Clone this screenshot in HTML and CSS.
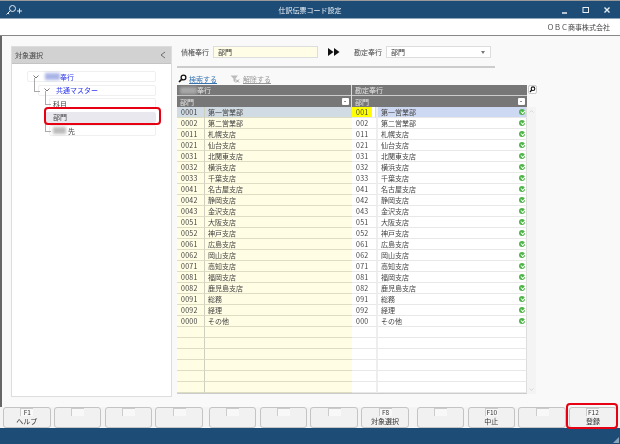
FILE: index.html
```html
<!DOCTYPE html>
<html lang="ja">
<head>
<meta charset="utf-8">
<title>仕訳伝票コード設定</title>
<link rel="stylesheet" href="styles.css">
</head>
<body>
<div class="window">
  <header class="titlebar">
    <svg class="title-icon" viewBox="0 0 18 12" width="18" height="12"><circle cx="7.5" cy="4.5" r="3" fill="none" stroke="#dfe8f0" stroke-width="1"/><path d="M5.5 6.5L1.5 10.5M3 9l1.2 1.2" stroke="#dfe8f0" fill="none"/><path d="M12 7h5M14.5 4.5v5" stroke="#dfe8f0" fill="none"/></svg>
    <span class="title-text">仕訳伝票コード設定</span>
    <div class="win-btns">
      <svg viewBox="0 0 8 8" width="8" height="8"><path d="M1 7h5" stroke="#e8eef4" stroke-width="1.5"/></svg>
      <svg viewBox="0 0 8 8" width="8" height="8"><rect x="1" y="1.5" width="5.5" height="5" fill="none" stroke="#e8eef4" stroke-width="1"/></svg>
      <svg viewBox="0 0 8 8" width="8" height="8"><path d="M1.5 1.5L6.5 6.5M6.5 1.5L1.5 6.5" stroke="#e8eef4" stroke-width="1.4"/></svg>
    </div>
  </header>
  <div class="company">ＯＢＣ商事株式会社</div>
  <main class="main">
    <aside class="side">
      <div class="side-head"><span>対象選択</span><svg viewBox="0 0 6 8" width="6" height="8"><path d="M5 1L1 4L5 7" fill="none" stroke="#555" stroke-width=".8"/></svg></div>
      <div class="tree">
        <div class="node n1 link"><svg class="chev" viewBox="0 0 6 4" width="6" height="4"><path d="M.5 .5L3 3L5.5 .5" fill="none" stroke="#555" stroke-width=".8"/></svg><i class="blur b1"></i><span>奉行</span></div>
        <div class="node n2 link con"><svg class="chev" viewBox="0 0 6 4" width="6" height="4"><path d="M.5 .5L3 3L5.5 .5" fill="none" stroke="#555" stroke-width=".8"/></svg><span>共通マスター</span></div>
        <div class="node n3 con"><span>科目</span></div>
        <div class="node n4 con"><span>部門</span></div>
        <div class="node n5 con"><i class="blur b2"></i><span>先</span></div>
        <div class="redbox tree-red"></div>
      </div>
    </aside>
    <section class="content">
      <div class="form">
        <label class="lab">債権奉行</label>
        <div class="field yellow">部門</div>
        <svg class="arrows" viewBox="0 0 12 8" width="12" height="8"><path d="M0 0L5.5 4L0 8ZM6 0L11.5 4L6 8Z" fill="#111"/></svg>
        <label class="lab">勘定奉行</label>
        <div class="field sel">部門<svg viewBox="0 0 4 3" width="4" height="3"><path d="M0 0H4L2 3Z" fill="#777"/></svg></div>
      </div>
      <div class="rule"></div>
      <div class="tools">
        <svg class="t-ico" viewBox="0 0 9 9" width="9" height="9"><circle cx="5.5" cy="3.5" r="2.4" fill="#fff" stroke="#111" stroke-width="1.3"/><path d="M3.6 5.4L1 8" stroke="#111" stroke-width="1.6"/></svg>
        <a class="tool on">検索する</a>
        <svg class="t-ico off" viewBox="0 0 10 8" width="10" height="8"><path d="M.5 .5H8L5.5 3.5V7.5L3.5 6V3.5Z" fill="#bbb"/><path d="M6 4.5L9 7.5M9 4.5L6 7.5" stroke="#888" stroke-width=".8"/></svg>
        <a class="tool">解除する</a>
      </div>
      <div class="gridwrap">
        <div class="heads">
          <div class="hcol hleft">
            <div class="h1"><i class="blur b3"></i>奉行</div>
            <div class="h2">部門<b class="drop"></b></div>
          </div>
          <div class="hcol hright">
            <div class="h1">勘定奉行</div>
            <div class="h2">部門<b class="drop"></b></div>
          </div>
          <svg class="zoomer" viewBox="0 0 9 9" width="9" height="9"><rect x=".4" y=".4" width="8.2" height="8.2" rx="2" fill="#fff" stroke="#aaa" stroke-width=".7"/><circle cx="5" cy="3.7" r="1.8" fill="none" stroke="#111" stroke-width="1.1"/><path d="M3.7 5L2 7" stroke="#111" stroke-width="1.3"/></svg>
        </div>
        <div class="body">
          <div class="rows" id="rows">
            <div class="row sel-row"><span class="c1">0001</span><span class="c2">第一営業部</span><span class="c3 cur">001</span><span class="c4">第一営業部<b class="ok"></b></span></div>
            <div class="row"><span class="c1">0002</span><span class="c2">第二営業部</span><span class="c3">002</span><span class="c4">第二営業部<b class="ok"></b></span></div>
            <div class="row"><span class="c1">0011</span><span class="c2">札幌支店</span><span class="c3">011</span><span class="c4">札幌支店<b class="ok"></b></span></div>
            <div class="row"><span class="c1">0021</span><span class="c2">仙台支店</span><span class="c3">021</span><span class="c4">仙台支店<b class="ok"></b></span></div>
            <div class="row"><span class="c1">0031</span><span class="c2">北関東支店</span><span class="c3">031</span><span class="c4">北関東支店<b class="ok"></b></span></div>
            <div class="row"><span class="c1">0032</span><span class="c2">横浜支店</span><span class="c3">032</span><span class="c4">横浜支店<b class="ok"></b></span></div>
            <div class="row"><span class="c1">0033</span><span class="c2">千葉支店</span><span class="c3">033</span><span class="c4">千葉支店<b class="ok"></b></span></div>
            <div class="row"><span class="c1">0041</span><span class="c2">名古屋支店</span><span class="c3">041</span><span class="c4">名古屋支店<b class="ok"></b></span></div>
            <div class="row"><span class="c1">0042</span><span class="c2">静岡支店</span><span class="c3">042</span><span class="c4">静岡支店<b class="ok"></b></span></div>
            <div class="row"><span class="c1">0043</span><span class="c2">金沢支店</span><span class="c3">043</span><span class="c4">金沢支店<b class="ok"></b></span></div>
            <div class="row"><span class="c1">0051</span><span class="c2">大阪支店</span><span class="c3">051</span><span class="c4">大阪支店<b class="ok"></b></span></div>
            <div class="row"><span class="c1">0052</span><span class="c2">神戸支店</span><span class="c3">052</span><span class="c4">神戸支店<b class="ok"></b></span></div>
            <div class="row"><span class="c1">0061</span><span class="c2">広島支店</span><span class="c3">061</span><span class="c4">広島支店<b class="ok"></b></span></div>
            <div class="row"><span class="c1">0062</span><span class="c2">岡山支店</span><span class="c3">062</span><span class="c4">岡山支店<b class="ok"></b></span></div>
            <div class="row"><span class="c1">0071</span><span class="c2">高知支店</span><span class="c3">071</span><span class="c4">高知支店<b class="ok"></b></span></div>
            <div class="row"><span class="c1">0081</span><span class="c2">福岡支店</span><span class="c3">081</span><span class="c4">福岡支店<b class="ok"></b></span></div>
            <div class="row"><span class="c1">0082</span><span class="c2">鹿児島支店</span><span class="c3">082</span><span class="c4">鹿児島支店<b class="ok"></b></span></div>
            <div class="row"><span class="c1">0091</span><span class="c2">総務</span><span class="c3">091</span><span class="c4">総務<b class="ok"></b></span></div>
            <div class="row"><span class="c1">0092</span><span class="c2">経理</span><span class="c3">092</span><span class="c4">経理<b class="ok"></b></span></div>
            <div class="row"><span class="c1">0000</span><span class="c2">その他</span><span class="c3">000</span><span class="c4">その他<b class="ok"></b></span></div>
            <div class="row"><span class="c1"></span><span class="c2"></span><span class="c3"></span><span class="c4"></span></div>
            <div class="row"><span class="c1"></span><span class="c2"></span><span class="c3"></span><span class="c4"></span></div>
            <div class="row"><span class="c1"></span><span class="c2"></span><span class="c3"></span><span class="c4"></span></div>
            <div class="row"><span class="c1"></span><span class="c2"></span><span class="c3"></span><span class="c4"></span></div>
            <div class="row"><span class="c1"></span><span class="c2"></span><span class="c3"></span><span class="c4"></span></div>
            <div class="row"><span class="c1"></span><span class="c2"></span><span class="c3"></span><span class="c4"></span></div>
          </div>
          <div class="scroll"><svg viewBox="0 0 5 3" width="5" height="3"><path d="M.5 2.5L2.5 .5L4.5 2.5" fill="none" stroke="#ccc" stroke-width=".7"/></svg><svg viewBox="0 0 5 3" width="5" height="3"><path d="M.5 .5L2.5 2.5L4.5 .5" fill="none" stroke="#ccc" stroke-width=".7"/></svg></div>
        </div>
      </div>
    </section>
  </main>
  <div class="fkeys">
    <div class="fgroup"><button class="fk"><em class="key">F1</em><span>ヘルプ</span></button><button class="fk"><em class="key"></em></button><button class="fk"><em class="key"></em></button><button class="fk"><em class="key"></em></button></div>
    <div class="fgroup"><button class="fk"><em class="key"></em></button><button class="fk"><em class="key"></em></button><button class="fk"><em class="key"></em></button><button class="fk"><em class="key">F8</em><span>対象選択</span></button></div>
    <div class="fgroup last"><button class="fk"><em class="key"></em></button><button class="fk"><em class="key">F10</em><span>中止</span></button><button class="fk"><em class="key"></em></button><button class="fk"><em class="key">F12</em><span>登録</span></button><div class="redbox key-red"></div></div>
  </div>
  <footer class="status"><svg viewBox="0 0 8 8" width="8" height="8"><path d="M7 1V7H1Z" fill="#8aa4bb"/></svg></footer>
</div>
</body>
</html>
```
FILE: styles.css
```css
* { box-sizing: border-box; }
html, body { margin: 0; padding: 0; }
body { width: 620px; height: 444px; overflow: hidden; background: #fff; font-family: "Noto Sans CJK JP", "Liberation Sans", sans-serif; font-size: 7px; color: #333; }
.window { width: 620px; height: 444px; display: flex; flex-direction: column; filter: blur(.25px); }
i, em { font-style: normal; }
.titlebar { height: 19px; flex: none; background: #1d4d77; border-top: 1px solid #9a9a9a; border-bottom: 1px solid #8fa6ba; display: flex; align-items: center; padding: 0 9px 0 5px; position: relative; }
.title-icon { flex: none; }
.title-text { position: absolute; left: 0; right: 0; text-align: center; color: #e8eef4; font-size: 7px; }
.win-btns { margin-left: auto; display: flex; gap: 13px; position: relative; }
.company { height: 17px; flex: none; background: #fff; text-align: right; padding: 3px 10px 0 0; font-size: 7px; line-height: 10px; color: #444; border-bottom: 1px solid #888; }
.main { height: 371px; flex: none; display: flex; background: #f9f9f9; border-left: 2px solid #666; padding: 10px 0 0 9px; }
.side { width: 161px; height: 351px; flex: none; background: #fff; border: 1px solid #ddd; }
.side-head { height: 17px; background: #d2d2d2; border-bottom: 1px solid #c4c4c4; display: flex; align-items: center; justify-content: space-between; padding: 0 5px 0 3px; color: #444; font-size: 7px; }
.tree { position: relative; padding-top: 7px; display: flex; flex-direction: column; gap: 2.5px; }
.node { position: relative; height: 11px; line-height: 10px; background: #fff; border: 1px solid #efefef; border-radius: 2px; margin-right: 15px; display: flex; align-items: center; font-size: 7px; color: #444; }
.n1 { margin-left: 15px; padding-left: 5px; }
.n2 { margin-left: 26px; padding-left: 5px; }
.n3 { margin-left: 37px; padding-left: 3px; }
.n4 { margin-left: 33px; padding-left: 7px; background: #e8e8ee; border-color: #e8e8ee; }
.n5 { margin-left: 37px; padding-left: 0; }
.link { color: #2b35f0; }
.chev { margin-right: 6px; flex: none; }
.con::before { content: ""; position: absolute; left: -5px; top: -8px; width: 5px; height: 13px; border-left: 1px solid #aaa; border-bottom: 1px solid #aaa; }
.n4::before { display: none; }
.blur { display: inline-block; background: #a9b4e6; filter: blur(1.5px); height: 7px; }
.b1 { width: 15px; }
.b2 { width: 13px; background: #bbb; margin-left: 3px; margin-right: 2px; }
.b3 { width: 17px; background: #a8a8a8; }
.redbox { position: absolute; border: 2.5px solid #e60012; border-radius: 4px; pointer-events: none; }
.tree-red { left: 32px; top: 43px; width: 117px; height: 18px; }
.content { width: 368px; flex: none; margin-left: 5px; display: flex; flex-direction: column; }
.form { height: 12px; display: flex; align-items: center; padding-left: 4px; }
.lab { width: 32px; flex: none; font-size: 7px; color: #444; }
.field { height: 12px; border: 1px solid #ddd; line-height: 10px; padding-left: 4px; font-size: 7px; display: flex; align-items: center; justify-content: space-between; }
.yellow { width: 105px; background: #fffde5; }
.arrows { margin: 0 14px 0 10px; flex: none; }
.sel { width: 105px; background: #fff; padding-right: 5px; }
.rule { width: 318px; height: 2px; margin-top: 8px; background: #ccc; }
.tools { height: 17px; display: flex; align-items: flex-end; padding: 0 0 1px 1px; }
.t-ico { flex: none; margin-bottom: 1px; }
.t-ico.off { margin-left: 13px; }
.tool { font-size: 7px; line-height: 9px; margin-left: 3px; color: #999; text-decoration: underline; }
.tool.on { color: #3a74b0; margin-left: 2px; }
.heads { display: flex; position: relative; height: 22px; }
.hcol { display: flex; flex-direction: column; color: #e4e4e4; background: #777; }
.hleft { width: 175px; border-right: 1px solid #ddd; }
.hright { width: 175px; }
.h1 { height: 11px; line-height: 10px; padding-left: 3px; display: flex; align-items: center; border-bottom: 1px solid #ccc; }
.h2 { height: 11px; line-height: 10px; padding: 0 2px 0 3px; display: flex; align-items: center; justify-content: space-between; }
.drop { width: 7px; height: 7px; background: #fff; border-radius: 1px; position: relative; }
.drop::after { content: ""; position: absolute; left: 2px; top: 3px; border: 1.5px solid transparent; border-top: 1.5px solid #222; border-bottom: 0; }
.zoomer { margin-left: 1px; flex: none; }
.body { display: flex; }
.rows { width: 350px; border-bottom: 1px solid #ccc; }
.row { height: 11px; display: flex; line-height: 10px; }
.row span { display: block; height: 11px; border-bottom: 1px solid #deddc4; padding-left: 3px; color: #444; white-space: nowrap; }
.row .c1, .row .c3 { padding-left: 4px; letter-spacing: .3px; }
.c1 { width: 28px; background: #fffde3; border-right: 1px solid #cfcfc0; }
.c2 { width: 147px; background: #fffde3; }
.row .c3 { width: 26px; background: #fff; border-bottom-color: #e8e8e8; border-right: 2px solid #eee; }
.row .c4 { width: 149px; background: #fff; border-bottom-color: #e8e8e8; border-right: 1px solid #ddd; position: relative; }
.sel-row .c1, .sel-row .c2 { background: #d0dbe4; }
.sel-row .c3.cur { background: linear-gradient(90deg, #ffff00 0, #ffff00 20px, #fff 20px, #fff 23px, #cdd8f3 23px); }
.sel-row .c4 { background: #cdd8f3; }
.ok { position: absolute; right: 1px; top: 2px; width: 6px; height: 6px; border-radius: 50%; background: #4fb548; }
.ok::after { content: ""; position: absolute; left: 1.5px; top: .8px; width: 3px; height: 2px; border-left: 1px solid #fff; border-bottom: 1px solid #fff; transform: rotate(-45deg); }
.scroll { width: 9px; background: #f4f4f4; display: flex; flex-direction: column; justify-content: space-between; align-items: center; padding: 3px 0; }
.fkeys { height: 21px; flex: none; display: flex; background: #f4f4f4; padding-left: 3px; }
.fgroup { display: flex; gap: 3.3px; position: relative; margin-right: 6px; }
.fgroup:nth-child(2) { margin-right: 8px; }
.fk { width: 47.5px; height: 21px; padding: 0; background: #f1f1f1; border: 1px solid #c4c4c4; border-radius: 3px; display: flex; flex-direction: column; align-items: center; font: 7px/9px "Noto Sans CJK JP", sans-serif; color: #333; }
.key { display: block; width: 13px; height: 8px; line-height: 7px; border-top: 1px solid #ccc; border-left: 1px solid #ccc; font-size: 6.5px; margin-bottom: .5px; text-align: center; background: #f8f8f8; }
.key-red { left: 149px; top: -4px; width: 52px; height: 26px; }
.status { height: 16px; flex: none; background: #1d4d77; display: flex; justify-content: flex-end; align-items: flex-end; }
```
